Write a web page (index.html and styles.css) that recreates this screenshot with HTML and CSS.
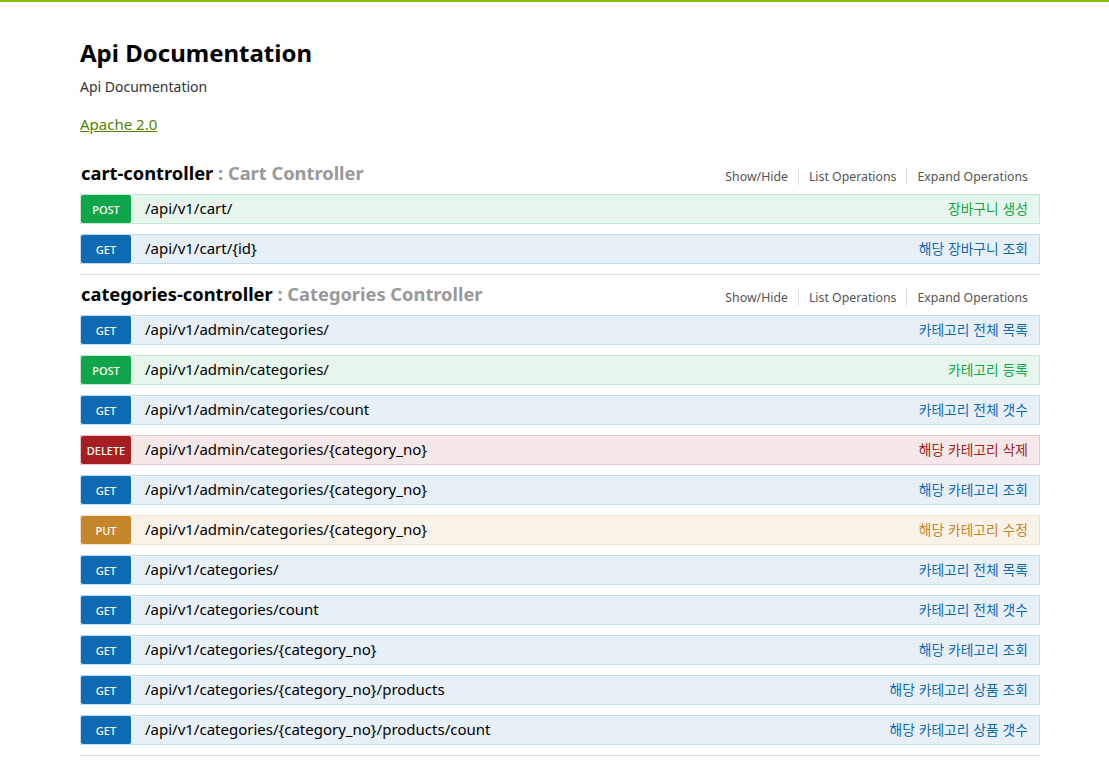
FILE: index.html
```html
<!DOCTYPE html>
<html lang="ko">
<head>
<meta charset="utf-8">
<title>Api Documentation</title>
<link rel="stylesheet" href="styles.css">
</head>
<body>
<div class="topbar"></div>
<div class="wrap">
  <div class="info">
    <div class="info-title">Api Documentation</div>
    <div class="info-desc">Api Documentation</div>
    <a class="info-license" href="#">Apache 2.0</a>
  </div>

  <section class="resource">
    <div class="res-heading">
      <h2><span class="res-name">cart-controller</span> <span class="res-desc">: Cart Controller</span></h2>
      <ul class="options">
        <li>Show/Hide</li>
        <li>List Operations</li>
        <li>Expand Operations</li>
      </ul>
    </div>
    <ul class="ops">
      <li class="op post"><span class="method">POST</span><span class="path">/api/v1/cart/</span><span class="summary">장바구니 생성</span></li>
      <li class="op get"><span class="method">GET</span><span class="path">/api/v1/cart/{id}</span><span class="summary">해당 장바구니 조회</span></li>
    </ul>
  </section>

  <section class="resource">
    <div class="res-heading">
      <h2><span class="res-name">categories-controller</span> <span class="res-desc">: Categories Controller</span></h2>
      <ul class="options">
        <li>Show/Hide</li>
        <li>List Operations</li>
        <li>Expand Operations</li>
      </ul>
    </div>
    <ul class="ops">
      <li class="op get"><span class="method">GET</span><span class="path">/api/v1/admin/categories/</span><span class="summary">카테고리 전체 목록</span></li>
      <li class="op post"><span class="method">POST</span><span class="path">/api/v1/admin/categories/</span><span class="summary">카테고리 등록</span></li>
      <li class="op get"><span class="method">GET</span><span class="path">/api/v1/admin/categories/count</span><span class="summary">카테고리 전체 갯수</span></li>
      <li class="op delete"><span class="method">DELETE</span><span class="path">/api/v1/admin/categories/{category_no}</span><span class="summary">해당 카테고리 삭제</span></li>
      <li class="op get"><span class="method">GET</span><span class="path">/api/v1/admin/categories/{category_no}</span><span class="summary">해당 카테고리 조회</span></li>
      <li class="op put"><span class="method">PUT</span><span class="path">/api/v1/admin/categories/{category_no}</span><span class="summary">해당 카테고리 수정</span></li>
      <li class="op get"><span class="method">GET</span><span class="path">/api/v1/categories/</span><span class="summary">카테고리 전체 목록</span></li>
      <li class="op get"><span class="method">GET</span><span class="path">/api/v1/categories/count</span><span class="summary">카테고리 전체 갯수</span></li>
      <li class="op get"><span class="method">GET</span><span class="path">/api/v1/categories/{category_no}</span><span class="summary">해당 카테고리 조회</span></li>
      <li class="op get"><span class="method">GET</span><span class="path">/api/v1/categories/{category_no}/products</span><span class="summary">해당 카테고리 상품 조회</span></li>
      <li class="op get"><span class="method">GET</span><span class="path">/api/v1/categories/{category_no}/products/count</span><span class="summary">해당 카테고리 상품 갯수</span></li>
    </ul>
  </section>
</div>
</body>
</html>
```
FILE: styles.css
```css
* { box-sizing: border-box; }
html, body { margin: 0; padding: 0; background: #fff; }
body {
  font-family: "Noto Sans", "Noto Sans CJK KR", sans-serif;
  color: #000;
  overflow: hidden;
}
.topbar { height: 2px; background: #89bf04; }
.wrap {
  width: 960px;
  margin: 0 69px 0 80px;
}
.info {
  padding-top: 37px;
  display: flex;
  flex-direction: column;
  align-items: flex-start;
  margin-bottom: 19px;
}
.info-title {
  font-size: 24px;
  font-weight: bold;
  line-height: 30px;
  height: 30px;
  margin-top: -1px;
}
.info-desc {
  margin-top: 9px;
  font-size: 14px;
  line-height: 20px;
  color: #333;
}
.info-license {
  margin-top: 17px;
  margin-bottom: 1px;
  font-size: 15px;
  line-height: 20px;
  color: #547f00;
  text-decoration: underline;
}
.resource {
  border-bottom: 1px solid #ddd;
  padding-bottom: 10px;
}
.res-heading {
  height: 40px;
  display: flex;
  align-items: center;
  justify-content: space-between;
  padding-bottom: 2px;
}
.res-heading h2 {
  margin: 0;
  font-size: 18.3px;
  font-weight: bold;
  line-height: 24px;
  padding-left: 1px;
}
.res-name { color: #000; }
.res-desc { color: #999; }
.options {
  list-style: none;
  margin: 0;
  padding: 0 2px 0 0;
  display: flex;
  font-size: 12.3px;
  line-height: 17px;
  color: #555;
}
.options li {
  padding: 0 10px;
  border-right: 1px solid #ddd;
  margin-top: 6px;
}
.options li:last-child { border-right: none; }
.ops {
  list-style: none;
  margin: 0;
  padding: 0;
  display: flex;
  flex-direction: column;
  gap: 10px;
}
.op {
  height: 30px;
  display: flex;
  align-items: center;
  border: 1px solid;
  padding-right: 11px;
}
.method {
  width: 50px;
  height: 28px;
  border-radius: 2px;
  color: #fff;
  font-size: 11px;
  font-weight: 500;
  line-height: 28px;
  text-align: center;
  padding-top: 1px;
  flex: none;
}
.path {
  padding-left: 14px;
  font-size: 15px;
  color: #000;
  flex: 1;
  padding-bottom: 2px;
}
.summary {
  font-size: 13.8px;
  font-family: "Noto Sans CJK KR", "Noto Sans", sans-serif;
  padding-bottom: 2px;
}
.get { background: #e7f0f7; border-color: #c3d9ec; }
.get .method { background: #0f6ab4; }
.get .summary { color: #0f6ab4; }
.post { background: #e7f6ec; border-color: #c3e8d1; }
.post .method { background: #10a54a; }
.post .summary { color: #10a54a; }
.delete { background: #f5e8e8; border-color: #e8c6c7; }
.delete .method { background: #a41e22; }
.delete .summary { color: #a41e22; }
.put { background: #f9f2e9; border-color: #f0e0ca; }
.put .method { background: #c5862b; }
.put .summary { color: #c5862b; }
```
